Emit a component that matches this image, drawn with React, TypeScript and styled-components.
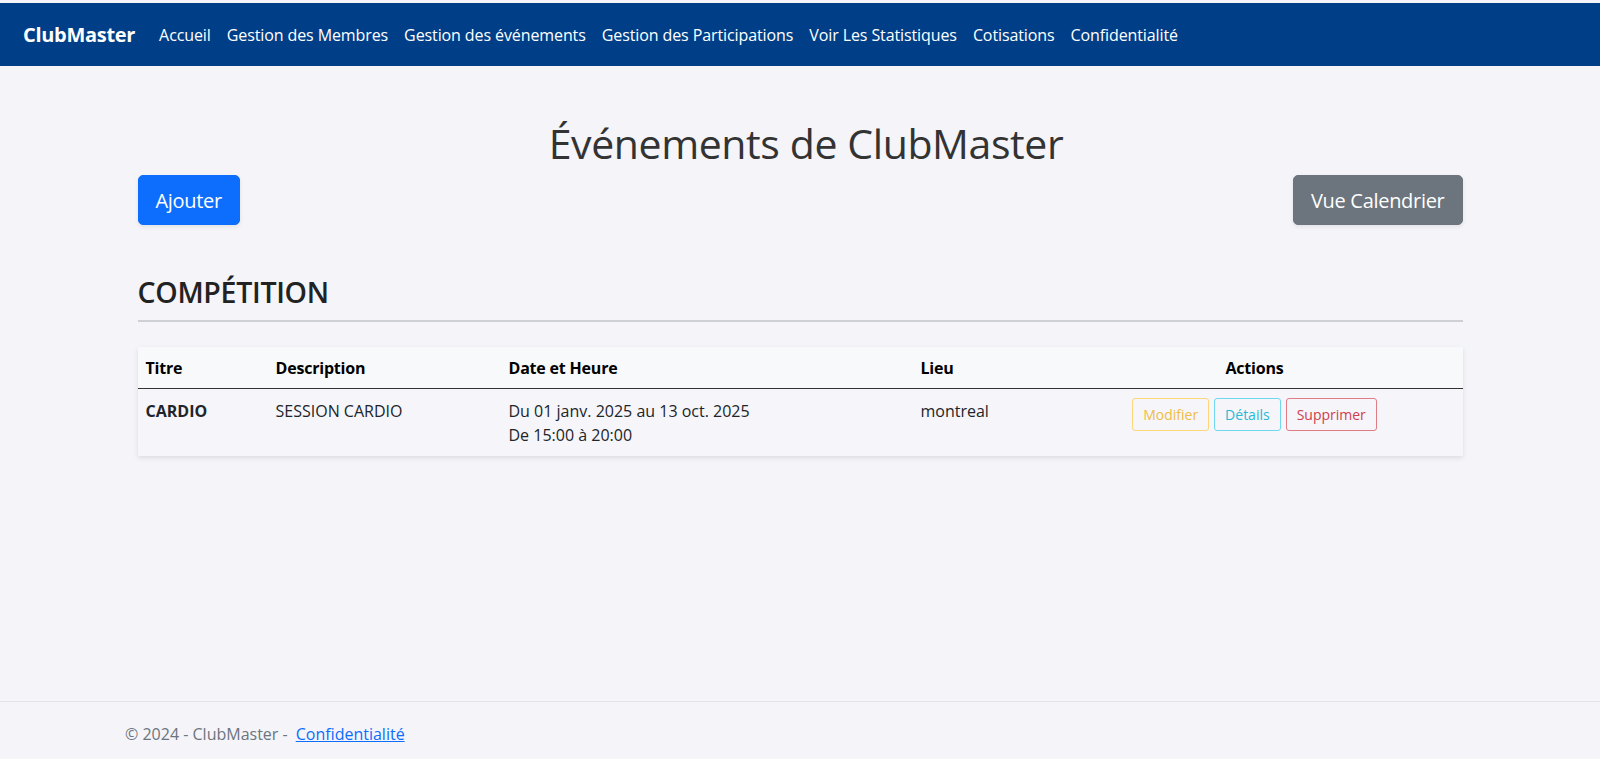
import React from "react";
import styled, { createGlobalStyle } from "styled-components";

const FONT = `"Open Sans", "Noto Sans", "Liberation Sans", sans-serif`;

const GlobalStyle = createGlobalStyle`
  html, body { margin: 0; padding: 0; }
  body {
    background: #f4f4f9;
    font-family: ${FONT};
    color: #212529;
    font-size: 16px;
  }
  * { box-sizing: border-box; }
`;

const Page = styled.div`
  min-height: 759px;
  display: flex;
  flex-direction: column;
  padding-top: 3px;
`;

const NavBar = styled.nav`
  height: 63px;
  background: #003f88;
  display: flex;
  align-items: center;
  padding: 0 23px;
  gap: 24px;
`;

const Brand = styled.a`
  color: #fff;
  font-weight: 700;
  font-size: 20px;
  letter-spacing: -0.3px;
  text-decoration: none;
`;

const NavLinks = styled.ul`
  display: flex;
  list-style: none;
  margin: 0;
  padding: 0;
  gap: 16px;
`;

const NavLink = styled.a`
  color: #fff;
  font-size: 16px;
  text-decoration: none;
  letter-spacing: -0.1px;
`;

const Main = styled.main`
  flex: 1;
  width: 1325px;
  margin: 0 auto;
  padding-top: 53px;
`;

const Title = styled.h1`
  margin: 0;
  padding-left: 12px;
  text-align: center;
  font-size: 41px;
  font-weight: 500;
  line-height: 1.2;
  color: #333;
  letter-spacing: -0.4px;
`;

const Toolbar = styled.div`
  display: flex;
  justify-content: space-between;
  margin-top: 7px;
`;

const BigButton = styled.button<{ $bg: string }>`
  background: ${(p) => p.$bg};
  color: #fff;
  border: 1px solid ${(p) => p.$bg};
  border-radius: 5px;
  height: 50px;
  padding: 0 17px;
  font-family: ${FONT};
  font-size: 20px;
  letter-spacing: -0.3px;
  box-shadow: 0 2px 4px rgba(0, 0, 0, 0.08);
  cursor: pointer;
`;

const Section = styled.section`
  margin-top: 50px;
`;

const SectionTitle = styled.h2`
  margin: 0;
  font-size: 28.5px;
  font-weight: 600;
  line-height: 1.2;
  color: #222;
  letter-spacing: -0.3px;
  padding-bottom: 11px;
  border-bottom: 2px solid #cfcfd6;
`;

const Table = styled.table`
  margin-top: 25px;
  width: 100%;
  border-collapse: collapse;
  box-shadow: 0 2px 5px rgba(0, 0, 0, 0.1);
  font-size: 16px;
`;

const HeadCell = styled.th<{ $w?: number; $center?: boolean }>`
  background: #f8f9fb;
  text-align: ${(p) => (p.$center ? "center" : "left")};
  width: ${(p) => (p.$w ? `${p.$w}px` : "auto")};
  font-weight: 700;
  color: #000;
  height: 41px;
  padding: 0 8px;
  border-bottom: 1px solid #333;
  letter-spacing: -0.2px;
`;

const Cell = styled.td<{ $bold?: boolean; $center?: boolean }>`
  background: #f5f5fa;
  vertical-align: top;
  padding: 10px 8px 8px;
  line-height: 24.5px;
  font-weight: ${(p) => (p.$bold ? 700 : 400)};
  text-align: ${(p) => (p.$center ? "center" : "left")};
  color: #212529;
`;

const Actions = styled.div`
  display: inline-flex;
  gap: 5px;
  margin-top: -1px;
`;

const OutlineButton = styled.button<{ $color: string; $border: string }>`
  background: transparent;
  color: ${(p) => p.$color};
  border: 1px solid ${(p) => p.$border};
  border-radius: 3px;
  height: 33px;
  padding: 0 10px;
  font-family: ${FONT};
  font-size: 14px;
  cursor: pointer;
`;

const Footer = styled.footer`
  border-top: 1px solid #e2e2e8;
  height: 58px;
  padding-left: 125px;
  display: flex;
  align-items: center;
  color: #6c757d;
  font-size: 16px;
  padding-top: 6px;
`;

const FooterLink = styled.a`
  color: #0d6efd;
  text-decoration: underline;
  margin-left: 8px;
`;

const links = [
  "Accueil",
  "Gestion des Membres",
  "Gestion des événements",
  "Gestion des Participations",
  "Voir Les Statistiques",
  "Cotisations",
  "Confidentialité",
];

export default function App() {
  return (
    <>
      <GlobalStyle />
      <Page>
        <NavBar>
          <Brand href="#">ClubMaster</Brand>
          <NavLinks>
            {links.map((l) => (
              <li key={l}>
                <NavLink href="#">{l}</NavLink>
              </li>
            ))}
          </NavLinks>
        </NavBar>
        <Main>
          <Title>Événements de ClubMaster</Title>
          <Toolbar>
            <BigButton $bg="#0d6efd">Ajouter</BigButton>
            <BigButton $bg="#6c757d">Vue Calendrier</BigButton>
          </Toolbar>
          <Section>
            <SectionTitle>COMPÉTITION</SectionTitle>
            <Table>
              <thead>
                <tr>
                  <HeadCell $w={130}>Titre</HeadCell>
                  <HeadCell $w={233}>Description</HeadCell>
                  <HeadCell $w={412}>Date et Heure</HeadCell>
                  <HeadCell $w={134}>Lieu</HeadCell>
                  <HeadCell $center>Actions</HeadCell>
                </tr>
              </thead>
              <tbody>
                <tr>
                  <Cell $bold>CARDIO</Cell>
                  <Cell>SESSION CARDIO</Cell>
                  <Cell>
                    Du 01 janv. 2025 au 13 oct. 2025
                    <br />
                    De 15:00 à 20:00
                  </Cell>
                  <Cell>montreal</Cell>
                  <Cell $center>
                    <Actions>
                      <OutlineButton $color="#f0bd45" $border="#fbd67a">Modifier</OutlineButton>
                      <OutlineButton $color="#27b9d6" $border="#6fd8ee">Détails</OutlineButton>
                      <OutlineButton $color="#cf3f4e" $border="#e07c86">Supprimer</OutlineButton>
                    </Actions>
                  </Cell>
                </tr>
              </tbody>
            </Table>
          </Section>
        </Main>
        <Footer>
          © 2024 - ClubMaster -<FooterLink href="#">Confidentialité</FooterLink>
        </Footer>
      </Page>
    </>
  );
}
